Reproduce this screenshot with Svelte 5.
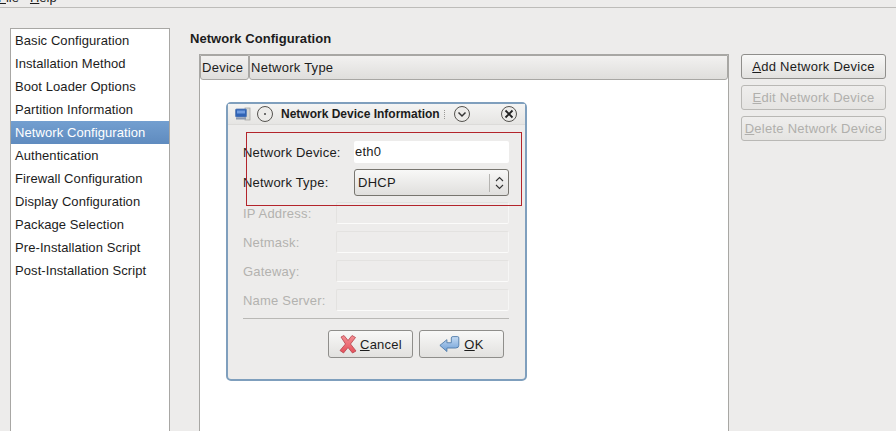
<script>
  const sections = [
    "Basic Configuration",
    "Installation Method",
    "Boot Loader Options",
    "Partition Information",
    "Network Configuration",
    "Authentication",
    "Firewall Configuration",
    "Display Configuration",
    "Package Selection",
    "Pre-Installation Script",
    "Post-Installation Script",
  ];
  const selected = "Network Configuration";
  const disabledFields = ["IP Address:", "Netmask:", "Gateway:", "Name Server:"];
</script>

<div class="window">
  <div class="menubar">
    <span><u>F</u>ile</span>
    <span><u>H</u>elp</span>
  </div>

  <div class="content">
    <ul class="sections">
      {#each sections as name}
        <li class:selected={name === selected}>{name}</li>
      {/each}
    </ul>

    <div class="main">
      <h1>Network Configuration</h1>
      <div class="columns">
        <div class="table">
          <div class="thead">
            <div class="th device">Device</div>
            <div class="th type">Network Type</div>
          </div>
        </div>
        <div class="actions">
          <button class="btn"><u>A</u>dd Network Device</button>
          <button class="btn" disabled><u>E</u>dit Network Device</button>
          <button class="btn" disabled><u>D</u>elete Network Device</button>
        </div>
      </div>
    </div>
  </div>

  <div class="dialog">
    <div class="titlebar">
      <svg class="appicon" width="16" height="14" viewBox="0 0 16 14">
        <rect x="10" y="1" width="5" height="12" fill="#d8d8d4" stroke="#a9a9a5" stroke-width="0.8" />
        <rect x="0.5" y="2" width="11" height="8" rx="1" fill="#2f62b5" stroke="#5c7fb5" stroke-width="0.8" />
        <rect x="2" y="3.5" width="8" height="3" fill="#6f9be0" />
        <rect x="1" y="10.5" width="10" height="2" fill="#8b98ad" />
      </svg>
      <span class="wm-circle pin"><i></i></span>
      <span class="title">Network Device Information</span>
      <span class="dots"></span>
      <span class="wm-circle down">
        <svg width="10" height="10" viewBox="0 0 10 10"><path d="M1.5 3.5 L5 7 L8.5 3.5" fill="none" stroke="#333" stroke-width="1.5" /></svg>
      </span>
      <span class="wm-circle close">
        <svg width="10" height="10" viewBox="0 0 10 10"><path d="M1.5 1.5 L8.5 8.5 M8.5 1.5 L1.5 8.5" fill="none" stroke="#222" stroke-width="1.8" /></svg>
      </span>
    </div>

    <div class="body">
      <div class="row first">
        <span class="label">Network Device:</span>
        <div class="entry">eth0</div>
      </div>
      <div class="row second">
        <span class="label">Network Type:</span>
        <div class="combo">
          <span class="combo-text">DHCP</span>
          <span class="combo-arrows">
            <svg width="9" height="14" viewBox="0 0 9 14"><path d="M1 5 L4.5 1.5 L8 5 M1 9 L4.5 12.5 L8 9" fill="none" stroke="#333" stroke-width="1.1" /></svg>
          </span>
        </div>
      </div>
      {#each disabledFields as field}
        <div class="row off">
          <span class="label">{field}</span>
          <div class="entry"></div>
        </div>
      {/each}

      <div class="sep"></div>

      <div class="dialog-actions">
        <button class="btn dlg">
          <svg width="18" height="20" viewBox="0 0 18 20">
            <defs>
              <linearGradient id="cancel-fill" x1="0" y1="0" x2="0" y2="1">
                <stop offset="0" stop-color="#f58f94" />
                <stop offset="1" stop-color="#e4505a" />
              </linearGradient>
            </defs>
            <path d="M2 3 L5 1.5 L9 6.5 L13 1.5 L16.5 3.5 L11.5 10 L17 17 L13.5 19 L9 13.5 L4.5 19 L1 16.5 L6.5 10 Z" fill="url(#cancel-fill)" stroke="#b5444c" stroke-width="0.8" />
          </svg>
          <span><u>C</u>ancel</span>
        </button>
        <button class="btn dlg">
          <svg width="22" height="19" viewBox="0 0 25 20">
            <defs>
              <linearGradient id="ok-fill" x1="0" y1="0" x2="0" y2="1">
                <stop offset="0" stop-color="#c4dbf3" />
                <stop offset="1" stop-color="#6f9fd6" />
              </linearGradient>
            </defs>
            <path d="M1 11 L9 4.5 V8 H14 V2.5 Q14 1 16 1 H21 Q22.5 1 22.5 2.5 V11 Q22.5 14 19 14 H9 V18 Z" fill="url(#ok-fill)" stroke="#4d7aa8" stroke-width="1" />
          </svg>
          <span><u>O</u>K</span>
        </button>
      </div>
    </div>
  </div>

  <div class="highlight"></div>
</div>

<style>
  :global(body) {
    margin: 0;
    background: #edeceb;
    overflow: hidden;
  }
  .window {
    position: relative;
    width: 896px;
    height: 431px;
    overflow: hidden;
    background: #edeceb;
    font-family: "Liberation Sans", Arial, sans-serif;
    font-size: 13px;
    color: #1c1c1c;
  }
  .menubar {
    height: 7px;
    border-bottom: 1px solid #bdbcb9;
    overflow: hidden;
    display: flex;
    gap: 11px;
    margin-left: -2px;
    line-height: 1;
  }
  .menubar span {
    margin-top: -9px;
    height: 17px;
  }
  .content {
    display: flex;
    padding: 20px 10px 0;
    gap: 20px;
  }
  .sections {
    list-style: none;
    margin: 0;
    padding: 0;
    width: 158px;
    height: 420px;
    flex: none;
    background: #fff;
    border: 1px solid #a8a7a4;
  }
  .sections li {
    height: 23px;
    line-height: 23px;
    padding-left: 4px;
    letter-spacing: 0.08px;
    white-space: nowrap;
  }
  .sections li.selected {
    background: linear-gradient(180deg, #739fd0, #5f8bbf);
    color: #fff;
  }
  .main {
    flex: 1;
    min-width: 0;
  }
  h1 {
    margin: 1px 0 0;
    font-size: 13px;
    font-weight: bold;
    line-height: 20px;
    letter-spacing: 0.05px;
  }
  .columns {
    display: flex;
    gap: 12px;
    margin-top: 5px;
    margin-left: 9px;
  }
  .table {
    width: 528px;
    height: 380px;
    flex: none;
    background: #fff;
    border: 1px solid #a8a7a4;
    border-bottom: 0;
  }
  .thead {
    display: flex;
    height: 25px;
  }
  .th {
    box-sizing: border-box;
    height: 25px;
    line-height: 23px;
    padding-left: 1px;
    background: linear-gradient(180deg, #f2f1f0, #dfdedc);
    border: 1px solid #a8a7a4;
    border-radius: 0 0 3px 3px;
    letter-spacing: 0.02em;
  }
  .th.device {
    width: 49px;
  }
  .th.type {
    flex: 1;
  }
  .actions {
    display: flex;
    flex-direction: column;
    gap: 6px;
    width: 145px;
  }
  .btn {
    box-sizing: border-box;
    height: 25px;
    padding: 0;
    font: inherit;
    letter-spacing: 0.02em;
    color: #1c1c1c;
    background: linear-gradient(180deg, #f8f8f7, #e2e1df);
    border: 1px solid #8f8e8b;
    border-radius: 3px;
    white-space: nowrap;
  }
  .btn:disabled {
    color: #b0afac;
    background: linear-gradient(180deg, #efeeed, #e5e4e2);
    border-color: #b9b8b5;
  }
  .dialog {
    position: absolute;
    left: 226px;
    top: 102px;
    box-sizing: border-box;
    width: 301px;
    height: 279px;
    background: #edeceb;
    border: 2px solid #7f9fbd;
    border-radius: 5px;
  }
  .titlebar {
    display: flex;
    align-items: center;
    height: 20px;
    padding-left: 7px;
    background: linear-gradient(180deg, #f4f4f3, #e6e5e3);
    border-bottom: 1px solid #dcdbd9;
  }
  .appicon {
    flex: none;
  }
  .wm-circle {
    box-sizing: border-box;
    display: flex;
    align-items: center;
    justify-content: center;
    flex: none;
    width: 16px;
    height: 16px;
    border-radius: 50%;
    border: 1px solid #55534f;
    background: #ecebe9;
  }
  .pin {
    margin-left: 6px;
  }
  .pin i {
    width: 2px;
    height: 2px;
    border-radius: 50%;
    background: #444;
  }
  .title {
    margin-left: 8px;
    font-size: 12px;
    font-weight: bold;
    white-space: nowrap;
  }
  .dots {
    margin-left: 4px;
    height: 9px;
    border-left: 1px dotted #9a9996;
  }
  .down {
    margin-left: 9px;
  }
  .close {
    margin-left: 31px;
  }
  .body {
    padding: 0 16px 0 15px;
  }
  .row {
    display: flex;
    align-items: center;
    height: 22px;
    margin-bottom: 7px;
    justify-content: space-between;
    letter-spacing: 0.2px;
  }
  .row.first {
    margin-top: 16px;
    margin-bottom: 6px;
  }
  .row.second {
    height: 27px;
    margin-bottom: 6px;
  }
  .row .entry {
    box-sizing: border-box;
    height: 22px;
    width: 155px;
    line-height: 22px;
    padding-left: 1px;
    background: #fff;
    border-radius: 2px;
  }
  .row .combo {
    box-sizing: border-box;
    display: flex;
    align-items: center;
    width: 155px;
    height: 27px;
    background: linear-gradient(180deg, #f8f8f7, #e0dfdd);
    border: 1px solid #77756f;
    border-radius: 3px;
    padding-left: 3px;
    letter-spacing: 0.02em;
  }
  .combo-text {
    flex: 1;
  }
  .combo-arrows {
    display: flex;
    align-items: center;
    justify-content: center;
    width: 18px;
    height: 18px;
    border-left: 1px solid #b5b4b1;
  }
  .row.off .label {
    color: #b3b2af;
  }
  .row.off .entry {
    width: 173px;
    background: #edeceb;
    border: 1px solid #e3e2e0;
    border-bottom-color: #fbfbfa;
    border-right-color: #f6f6f5;
  }
  .sep {
    height: 1px;
    margin-top: 6px;
    background: #b9b8b5;
  }
  .dialog-actions {
    display: flex;
    justify-content: flex-end;
    gap: 6px;
    margin-top: 11px;
    padding-right: 5px;
  }
  .btn.dlg {
    display: flex;
    align-items: center;
    justify-content: center;
    gap: 3px;
    width: 85px;
    height: 28px;
  }
  .highlight {
    position: absolute;
    left: 246px;
    top: 132px;
    box-sizing: border-box;
    width: 276px;
    height: 74px;
    border: 1px solid #b3242b;
    pointer-events: none;
  }
</style>
